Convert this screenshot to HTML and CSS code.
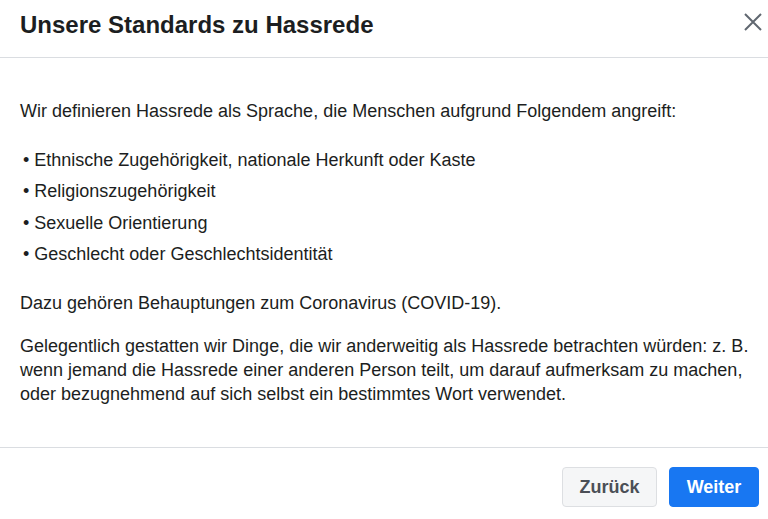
FILE: index.html
```html
<!DOCTYPE html>
<html lang="de">
<head>
<meta charset="utf-8">
<link rel="stylesheet" href="styles.css">
</head>
<body>
<div class="modal">
  <div class="header">
    <h1 class="title">Unsere Standards zu Hassrede</h1>
    <button class="close" aria-label="Schließen">
      <svg width="18" height="18" viewBox="0 0 18 18"><path d="M1 1 L17 17 M17 1 L1 17" stroke="#606770" stroke-width="2" fill="none"/></svg>
    </button>
  </div>
  <div class="body">
    <p class="intro">Wir definieren Hassrede als Sprache, die Menschen aufgrund Folgendem angreift:</p>
    <ul class="list">
      <li>• Ethnische Zugehörigkeit, nationale Herkunft oder Kaste</li>
      <li>• Religionszugehörigkeit</li>
      <li>• Sexuelle Orientierung</li>
      <li>• Geschlecht oder Geschlechtsidentität</li>
    </ul>
    <p class="p1">Dazu gehören Behauptungen zum Coronavirus (COVID-19).</p>
    <p class="p2">Gelegentlich gestatten wir Dinge, die wir anderweitig als Hassrede betrachten würden: z.&nbsp;B. wenn jemand die Hassrede einer anderen Person teilt, um darauf aufmerksam zu machen, oder bezugnehmend auf sich selbst ein bestimmtes Wort verwendet.</p>
  </div>
  <div class="footer">
    <button class="btn secondary">Zurück</button>
    <button class="btn primary">Weiter</button>
  </div>
</div>
</body>
</html>
```
FILE: styles.css
```css
* { box-sizing: border-box; }
html, body { margin: 0; padding: 0; background: #fff; }
body { font-family: "Liberation Sans", Arial, sans-serif; color: #1c1e21; }
.modal { width: 768px; height: 519px; display: flex; flex-direction: column; }
.header {
  height: 58px;
  flex: none;
  border-bottom: 1px solid #dadde1;
  display: flex;
  align-items: flex-start;
  justify-content: space-between;
  padding: 11px 6px 0 20px;
}
.title { margin: 0; font-size: 24px; line-height: 28px; font-weight: bold; color: #1c1e21; }
.close { border: 0; background: none; padding: 0; margin-top: 2px; width: 18px; height: 18px; cursor: pointer; }
.close svg { display: block; }
.body { flex: none; padding: 41px 16px 0 20px; height: 390px; border-bottom: 1px solid #dadde1; font-size: 18px; line-height: 24px; }
.body p { margin: 0; }
.intro { margin-bottom: 25px !important; }
.list { list-style: none; margin: 0; padding: 0 0 0 3px; display: flex; flex-direction: column; gap: 7.33px; }
.p1 { margin-top: 24.7px !important; }
.p2 { margin-top: 19.3px !important; }
.footer { display: flex; justify-content: flex-end; gap: 12px; padding: 19px 9px 0 0; }
.btn {
  height: 40px;
  border-radius: 4px;
  font-family: "Liberation Sans", Arial, sans-serif;
  font-size: 18px;
  font-weight: bold;
  padding: 0;
  cursor: pointer;
}
.secondary { width: 95px; background: #f5f6f7; border: 1px solid #dddfe2; color: #4b4f56; }
.primary { width: 90px; background: #1877f2; border: 1px solid #1877f2; color: #fff; }
```
